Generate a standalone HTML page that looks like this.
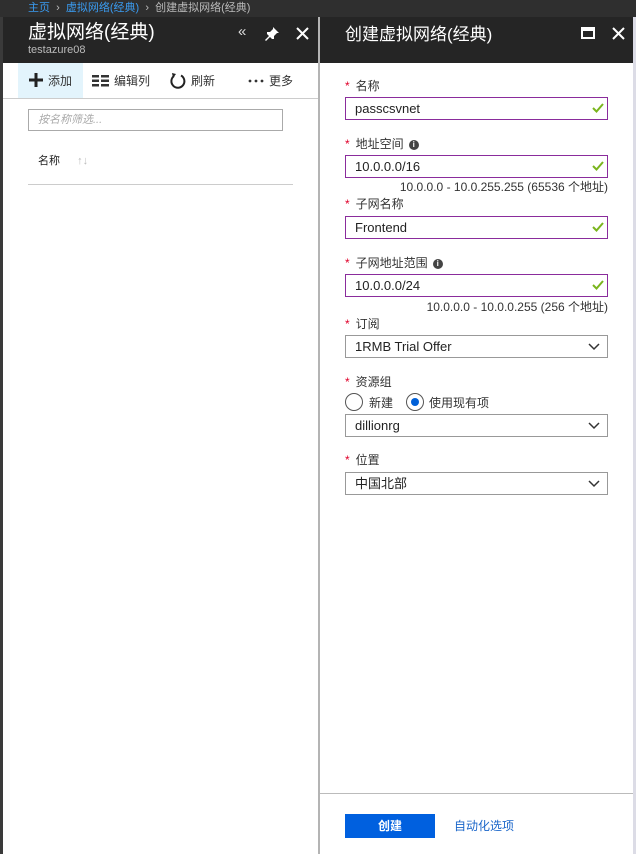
<!DOCTYPE html>
<html><head><meta charset="utf-8"><style>
*{margin:0;padding:0;box-sizing:border-box}
body{width:636px;height:854px;overflow:hidden;background:#fff;font-family:"Liberation Sans","Noto Sans CJK SC",sans-serif;position:relative;font-size:12px;color:#333;line-height:1.2}
.abs{position:absolute}
.top{left:0;top:0;width:636px;height:17px;background:#2f2f2f;font-size:11px;color:#bbb;line-height:17px;padding-left:28px}
.top a{color:#3a9bf0}
.lh{left:0;top:17px;width:318px;height:46px;background:#252525}
.rh{left:320px;top:17px;width:313px;height:46px;background:#252525}
.edge{left:0;top:17px;width:3px;height:837px;background:#3a3a3a}
.div{left:318px;top:17px;width:2px;height:837px;background:#b4b4b4}
.rs{left:633px;top:17px;width:3px;height:837px;background:#dcdce6}
.lbl{left:345px;font-size:12px;color:#333}
.lbl b{color:#e0002a;font-weight:normal;margin-right:6px}
.in{left:345px;width:263px;height:23px;border:1px solid #8a2c9c;font-size:13px;line-height:21px;padding-left:9px;color:#222}
.sel{border-color:#999}
.ck{position:absolute;right:3px;top:4px}
.chev{position:absolute;right:7px;top:7px}
.hint{right:28px;font-size:12px;color:#333}
.info{display:inline-block;width:10px;height:10px;border-radius:50%;background:#444;color:#fff;font-size:8px;line-height:10px;text-align:center;font-weight:bold;margin-left:5px;vertical-align:1px}
</style></head><body>
<div class="abs top"><a>主页</a> &nbsp;›&nbsp; <a>虚拟网络(经典)</a> &nbsp;›&nbsp; 创建虚拟网络(经典)</div>
<div class="abs lh"></div><div class="abs rh"></div>
<div class="abs edge"></div><div class="abs div"></div><div class="abs rs"></div>
<div class="abs" style="left:28px;top:21px;font-size:19px;line-height:24px;color:#fff">虚拟网络(经典)</div>
<div class="abs" style="left:28px;top:44px;font-size:11px;line-height:13px;color:#bbb">testazure08</div>
<div class="abs" style="left:238px;top:23px;font-size:15px;color:#ddd">«</div>
<svg class="abs" style="left:264px;top:26px" width="16" height="16" viewBox="0 0 16 16"><path d="M9 1l6 6-2 0-3 3 0 3-2 0-2-2-4 4-1-1 4-4-2-2 0-2 3 0 3-3z" fill="#fff"/></svg>
<svg class="abs" style="left:296px;top:27px" width="13" height="13"><path d="M1 1L12 12M12 1L1 12" stroke="#fff" stroke-width="2"/></svg>
<div class="abs" style="left:345px;top:24px;font-size:17px;line-height:22px;color:#fff">创建虚拟网络(经典)</div>
<svg class="abs" style="left:581px;top:27px" width="14" height="12"><rect x="1" y="1" width="12" height="10" fill="none" stroke="#fff" stroke-width="2"/><rect x="1" y="1" width="12" height="3" fill="#fff"/></svg>
<svg class="abs" style="left:612px;top:27px" width="13" height="13"><path d="M1 1L12 12M12 1L1 12" stroke="#fff" stroke-width="2"/></svg>
<div class="abs" style="left:18px;top:63px;width:65px;height:35px;background:#e3f4fc"></div>
<div class="abs" style="left:3px;top:98px;width:315px;height:1px;background:#ccc"></div>
<svg class="abs" style="left:28px;top:72px" width="16" height="16"><path d="M8 1V15M1 8H15" stroke="#222" stroke-width="3"/></svg>
<div class="abs" style="left:48px;top:74px;font-size:12px">添加</div>
<svg class="abs" style="left:92px;top:75px" width="17" height="12"><g fill="#333"><rect x="0" y="0" width="7" height="2.5"/><rect x="9" y="0" width="8" height="2.5"/><rect x="0" y="4.5" width="7" height="2.5"/><rect x="9" y="4.5" width="8" height="2.5"/><rect x="0" y="9" width="7" height="2.5"/><rect x="9" y="9" width="8" height="2.5"/></g></svg>
<div class="abs" style="left:114px;top:74px">编辑列</div>
<svg class="abs" style="left:169px;top:72px" width="17" height="17"><path d="M5 4A6.5 6.5 0 1 0 12 3.5" fill="none" stroke="#222" stroke-width="2"/><path d="M3 1L7 2 4 6z" fill="#222"/></svg>
<div class="abs" style="left:191px;top:74px">刷新</div>
<svg class="abs" style="left:248px;top:79px" width="16" height="4"><circle cx="2" cy="2" r="1.4" fill="#333"/><circle cx="8" cy="2" r="1.4" fill="#333"/><circle cx="14" cy="2" r="1.4" fill="#333"/></svg>
<div class="abs" style="left:269px;top:74px">更多</div>
<div class="abs" style="left:28px;top:109px;width:255px;height:22px;border:1px solid #aaa;font-size:11px;color:#aaa;padding:4px 0 0 9px;font-style:italic">按名称筛选...</div>
<div class="abs" style="left:38px;top:155px;font-size:11px;color:#222">名称 <span style="color:#bbb;margin-left:14px">↑↓</span></div>
<div class="abs" style="left:28px;top:184px;width:265px;height:1px;background:#ccc"></div>
<div class="abs lbl" style="top:79px"><b>*</b>名称</div>
<div class="abs in" style="top:97px">passcsvnet<svg class="ck" width="12" height="12"><path d="M1 6l3.5 3.5L11 2" fill="none" stroke="#7ab51d" stroke-width="2"/></svg></div>
<div class="abs lbl" style="top:137px"><b>*</b>地址空间<span class="info">i</span></div>
<div class="abs in" style="top:155px">10.0.0.0/16<svg class="ck" width="12" height="12"><path d="M1 6l3.5 3.5L11 2" fill="none" stroke="#7ab51d" stroke-width="2"/></svg></div>
<div class="abs hint" style="top:180px">10.0.0.0 - 10.0.255.255 (65536 个地址)</div>
<div class="abs lbl" style="top:197px"><b>*</b>子网名称</div>
<div class="abs in" style="top:216px">Frontend<svg class="ck" width="12" height="12"><path d="M1 6l3.5 3.5L11 2" fill="none" stroke="#7ab51d" stroke-width="2"/></svg></div>
<div class="abs lbl" style="top:256px"><b>*</b>子网地址范围<span class="info">i</span></div>
<div class="abs in" style="top:274px">10.0.0.0/24<svg class="ck" width="12" height="12"><path d="M1 6l3.5 3.5L11 2" fill="none" stroke="#7ab51d" stroke-width="2"/></svg></div>
<div class="abs hint" style="top:300px">10.0.0.0 - 10.0.0.255 (256 个地址)</div>
<div class="abs lbl" style="top:317px"><b>*</b>订阅</div>
<div class="abs in sel" style="top:335px">1RMB Trial Offer<svg class="chev" width="12" height="8"><path d="M1 1l5 5 5-5" fill="none" stroke="#333" stroke-width="1.5"/></svg></div>
<div class="abs lbl" style="top:375px"><b>*</b>资源组</div>
<div class="abs" style="left:345px;top:393px;width:18px;height:18px;border:1px solid #555;border-radius:50%"></div>
<div class="abs" style="left:369px;top:396px">新建</div>
<div class="abs" style="left:406px;top:393px;width:18px;height:18px;border:1px solid #555;border-radius:50%"><div style="margin:4px;width:8px;height:8px;border-radius:50%;background:#0060d8"></div></div>
<div class="abs" style="left:429px;top:396px">使用现有项</div>
<div class="abs in sel" style="top:414px">dillionrg<svg class="chev" width="12" height="8"><path d="M1 1l5 5 5-5" fill="none" stroke="#333" stroke-width="1.5"/></svg></div>
<div class="abs lbl" style="top:453px"><b>*</b>位置</div>
<div class="abs in sel" style="top:472px">中国北部<svg class="chev" width="12" height="8"><path d="M1 1l5 5 5-5" fill="none" stroke="#333" stroke-width="1.5"/></svg></div>
<div class="abs" style="left:320px;top:793px;width:313px;height:1px;background:#bbb"></div>
<div class="abs" style="left:345px;top:814px;width:90px;height:24px;background:#0060df;color:#fff;text-align:center;line-height:24px;font-weight:bold">创建</div>
<div class="abs" style="left:454px;top:819px;color:#1a66c9">自动化选项</div>
</body></html>
